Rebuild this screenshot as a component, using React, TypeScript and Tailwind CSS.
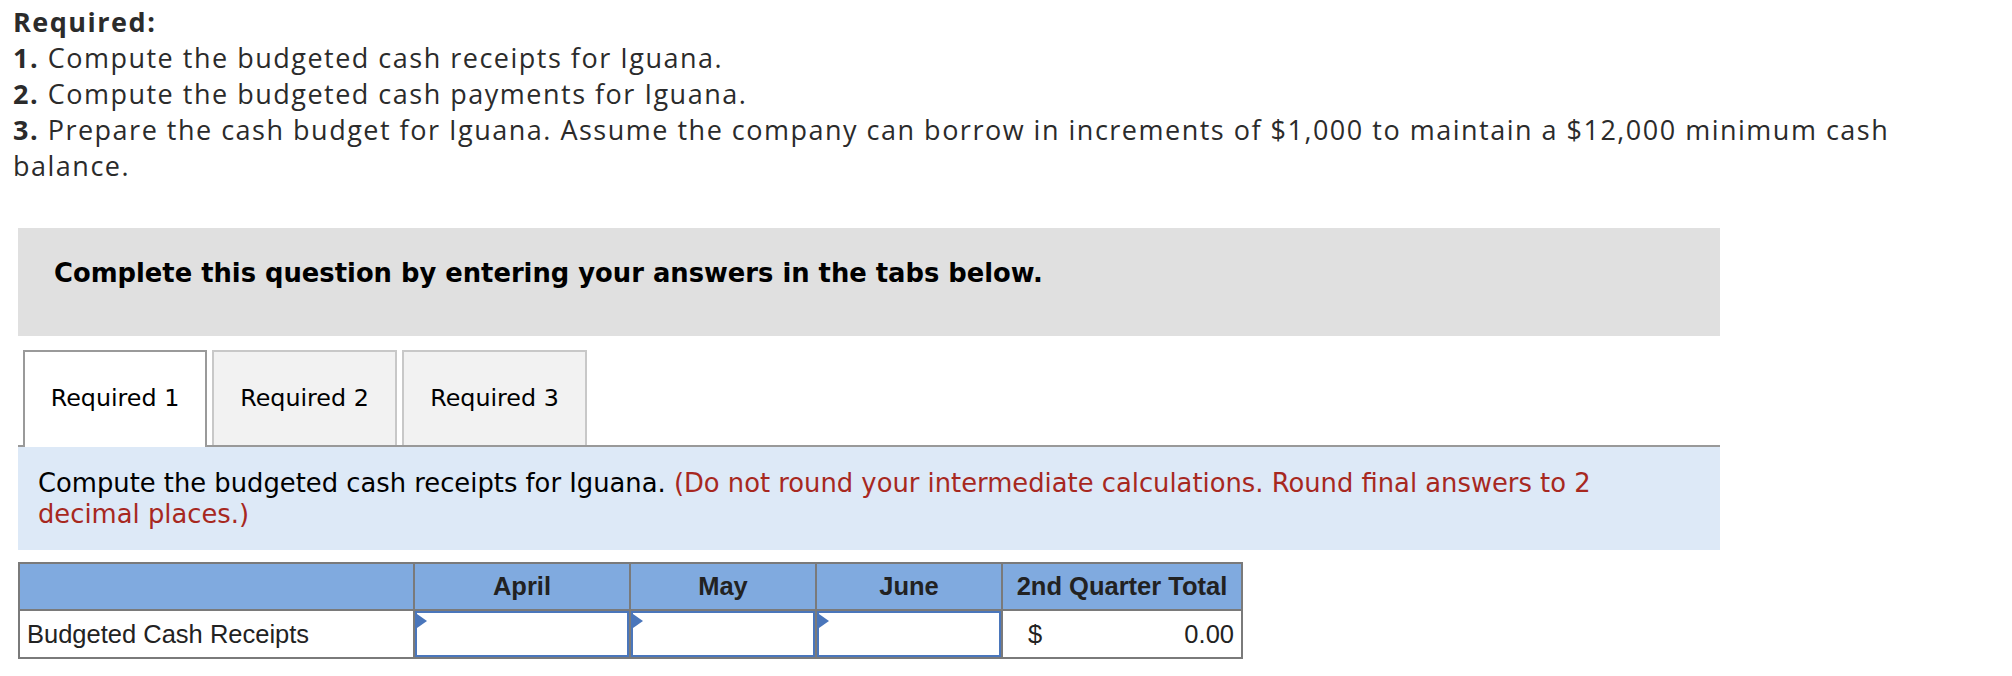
import React from "react";

const proxima = { fontFamily: '"Open Sans", "Noto Sans", sans-serif' };

function Flag() {
  return (
    <svg className="absolute left-0 top-[1px]" width="10" height="14" viewBox="0 0 10 14">
      <polygon points="0,0 10,7 0,14" fill="#4a76bb" />
    </svg>
  );
}

function InputCell() {
  return (
    <div className="relative border-l-2 border-[#7a7a7a] h-[46px] p-0">
      <div className="relative h-full w-full border-2 border-[#4a76bb] bg-white">
        <Flag />
      </div>
    </div>
  );
}

export default function App() {
  return (
    <div className="min-h-[676px] w-[2012px] bg-white text-[#2b2b2b]">
      {/* Required text */}
      <div
        className="pl-[13px] pt-[4px] max-w-[1910px] text-[27px] leading-[36px] tracking-[1.5px]"
        style={proxima}
      >
        <div className="font-bold">Required:</div>
        <div>
          <span className="font-bold">1.</span> Compute the budgeted cash receipts for Iguana.
        </div>
        <div>
          <span className="font-bold">2.</span> Compute the budgeted cash payments for Iguana.
        </div>
        <div>
          <span className="font-bold">3.</span> Prepare the cash budget for Iguana. Assume the company can borrow in increments of $1,000 to maintain a $12,000 minimum cash balance.
        </div>
      </div>

      {/* Gray instruction box */}
      <div className="ml-[18px] mt-[44px] w-[1702px] h-[108px] bg-[#e0e0e0] pl-[36px] pt-[30px]">
        <div
          className="font-bold text-[25.8px] leading-[30px] text-black"
          style={{ fontFamily: '"DejaVu Sans", Verdana, sans-serif' }}
        >
          Complete this question by entering your answers in the tabs below.
        </div>
      </div>

      {/* Tabs */}
      <div
        className="ml-[18px] mt-[14px] w-[1702px] flex items-end pl-[5px] gap-[5px]"
        style={{ fontFamily: '"DejaVu Sans", Verdana, sans-serif' }}
      >
        <div className="relative z-10 w-[184px] h-[97px] -mb-[2px] bg-white border-2 border-b-0 border-[#9a9a9a] flex items-center justify-center text-[23.8px] text-black pb-[2px]">
          Required 1
        </div>
        <div className="w-[185px] h-[95px] bg-[#f2f2f2] border-2 border-b-0 border-[#c8c8c8] flex items-center justify-center text-[23.8px] text-black">
          Required 2
        </div>
        <div className="w-[185px] h-[95px] bg-[#f2f2f2] border-2 border-b-0 border-[#c8c8c8] flex items-center justify-center text-[23.8px] text-black">
          Required 3
        </div>
      </div>

      {/* Blue question box */}
      <div
        className="ml-[18px] w-[1702px] h-[105px] bg-[#dde9f7] border-t-2 border-[#999999] pl-[20px] pr-[60px] pt-[21px] text-[25.8px] leading-[31px] text-black"
        style={{ fontFamily: '"DejaVu Sans", Verdana, sans-serif' }}
      >
        Compute the budgeted cash receipts for Iguana.{" "}
        <span className="text-[#a7281f]">
          (Do not round your intermediate calculations. Round final answers to 2 decimal places.)
        </span>
      </div>

      {/* Table */}
      <div
        className="ml-[18px] mt-[12px] w-[1225px] border-2 border-[#7a7a7a] text-[25.5px] text-[#222]"
        style={{ fontFamily: '"Liberation Sans", Arial, sans-serif' }}
      >
        <div className="grid grid-cols-[393px_216px_186px_186px_240px] bg-[#80aadf] border-b-2 border-[#7a7a7a] h-[47px] font-bold">
          <div className="h-[45px]"></div>
          <div className="border-l-2 border-[#7a7a7a] h-[45px] flex items-center justify-center">April</div>
          <div className="border-l-2 border-[#7a7a7a] h-[45px] flex items-center justify-center">May</div>
          <div className="border-l-2 border-[#7a7a7a] h-[45px] flex items-center justify-center">June</div>
          <div className="border-l-2 border-[#7a7a7a] h-[45px] flex items-center justify-center">2nd Quarter Total</div>
        </div>
        <div className="grid grid-cols-[393px_216px_186px_186px_240px] h-[46px] bg-white">
          <div className="flex items-center pl-[7px]">Budgeted Cash Receipts</div>
          <InputCell />
          <InputCell />
          <InputCell />
          <div className="border-l-2 border-[#7a7a7a] flex items-center justify-between pl-[25px] pr-[7px]">
            <span>$</span>
            <span>0.00</span>
          </div>
        </div>
      </div>
    </div>
  );
}
